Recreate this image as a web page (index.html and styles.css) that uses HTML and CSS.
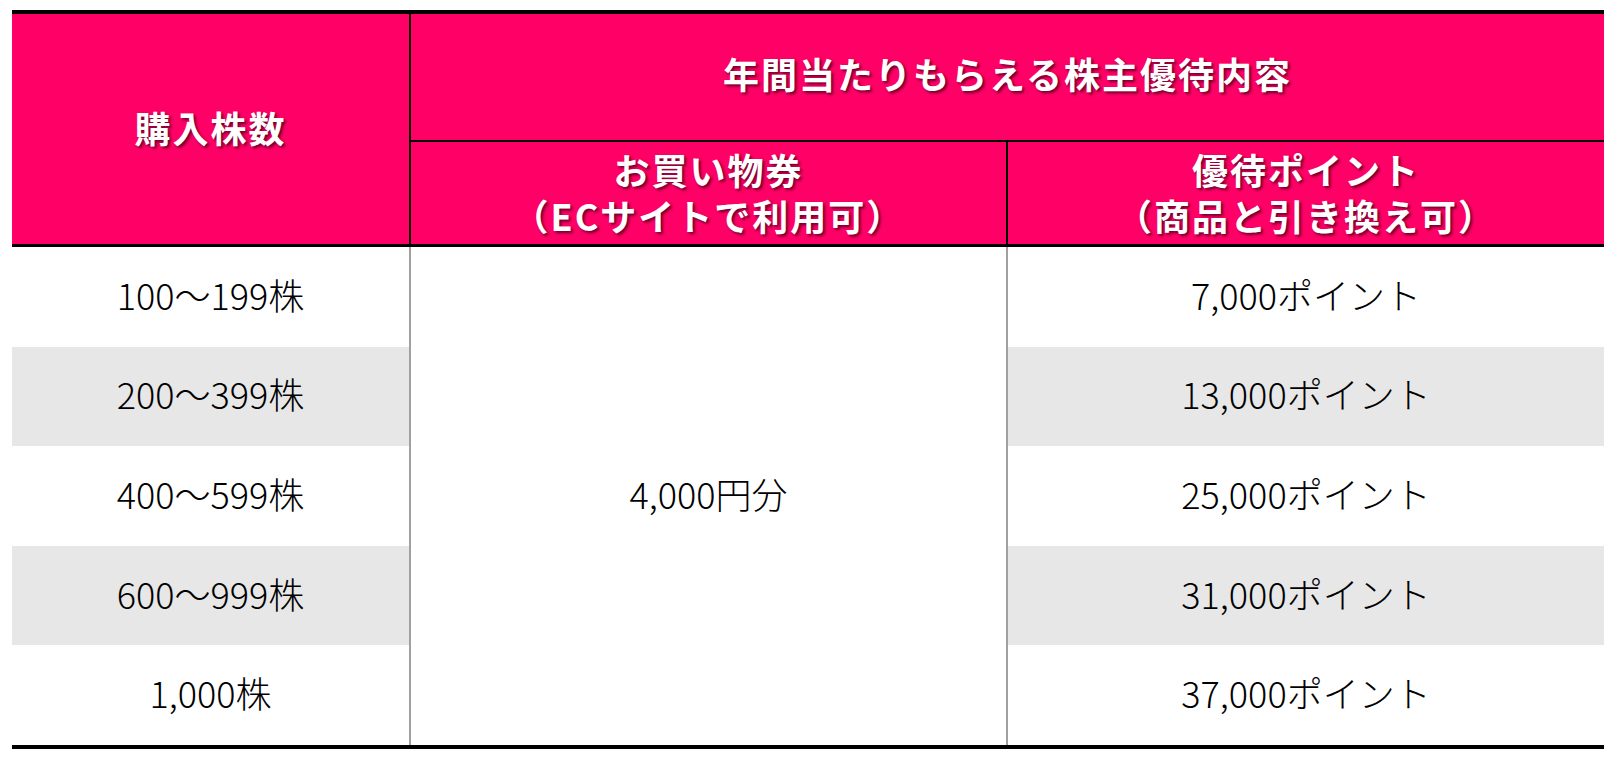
FILE: index.html
```html
<!DOCTYPE html>
<html lang="ja">
<head>
<meta charset="utf-8">
<title>株主優待</title>
<link rel="stylesheet" href="styles.css">
</head>
<body>
<div class="sheet">
  <div class="head">
    <div class="h-cell h-shares">購入株数</div>
    <div class="h-cell h-title">年間当たりもらえる株主優待内容</div>
    <div class="h-cell h-sub h-sub1"><span class="ln">お買い物券</span><span class="ln">（ECサイトで利用可）</span></div>
    <div class="h-cell h-sub h-sub2"><span class="ln">優待ポイント</span><span class="ln">（商品と引き換え可）</span></div>
  </div>
  <div class="body">
    <div class="c c1">100～199株</div>
    <div class="c c2">4,000円分</div>
    <div class="c c3">7,000ポイント</div>
    <div class="c c1 alt">200～399株</div>
    <div class="c c3 alt">13,000ポイント</div>
    <div class="c c1">400～599株</div>
    <div class="c c3">25,000ポイント</div>
    <div class="c c1 alt">600～999株</div>
    <div class="c c3 alt">31,000ポイント</div>
    <div class="c c1">1,000株</div>
    <div class="c c3">37,000ポイント</div>
  </div>
</div>
</body>
</html>
```

FILE: styles.css
```css
html, body {
  margin: 0;
  padding: 0;
  background: #ffffff;
}
body {
  padding: 10px 0 0 12px;
  font-family: "Noto Sans CJK JP", "Noto Sans", sans-serif;
}
.sheet {
  width: 1592px;
  border-top: 4px solid #000;
  border-bottom: 4px solid #000;
}
.head {
  display: grid;
  grid-template-columns: 397px 597px 598px;
  grid-template-rows: 128px 102px;
  background: #ff0066;
  border-bottom: 3px solid #000;
}
.h-cell {
  display: flex;
  align-items: center;
  justify-content: center;
  text-align: center;
  color: #ffffff;
  font-weight: 700;
  font-size: 36px;
  letter-spacing: 2px;
  text-shadow: 2px 2px 3px rgba(60, 0, 20, 0.75);
  padding-bottom: 4px;
}
.h-shares {
  grid-row: 1 / span 2;
  grid-column: 1;
}
.h-title {
  grid-row: 1;
  grid-column: 2 / span 2;
  border-left: 2px solid #000;
  border-bottom: 2px solid #000;
  padding-bottom: 8px;
}
.h-sub {
  flex-direction: column;
  border-left: 2px solid #000;
  padding-bottom: 3px;
}
.ln {
  display: block;
  line-height: 46px;
}
.h-sub1 { grid-column: 2; grid-row: 2; }
.h-sub2 { grid-column: 3; grid-row: 2; }

.body {
  display: grid;
  grid-template-columns: 397px 597px 598px;
  grid-template-rows: repeat(5, 99.6px);
}
.c {
  display: flex;
  align-items: center;
  justify-content: center;
  font-size: 36px;
  color: #000;
  font-weight: 300;
  padding-bottom: 6px;
}
.c1 { grid-column: 1; }
.c2 {
  grid-column: 2;
  grid-row: 1 / span 5;
  border-left: 2px solid #a0a0a0;
  background: #fff;
}
.c3 {
  grid-column: 3;
  border-left: 2px solid #a0a0a0;
}
.alt { background: #e7e7e7; }
```
